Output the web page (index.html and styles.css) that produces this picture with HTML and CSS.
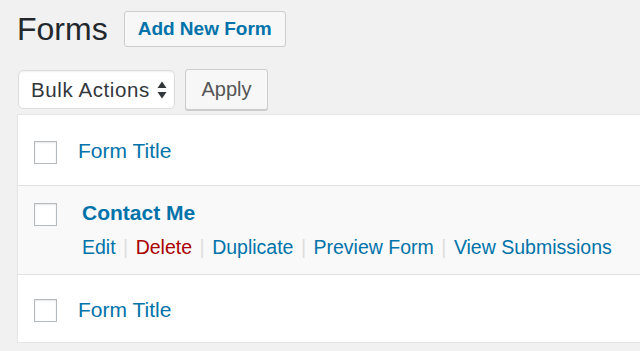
FILE: index.html
```html
<!DOCTYPE html>
<html lang="en">
<head>
<meta charset="utf-8">
<title>Forms</title>
<link rel="stylesheet" href="styles.css">
</head>
<body>
<div class="wrap">
  <div class="title-row">
    <h1 class="page-title">Forms</h1>
    <a class="title-action" href="#">Add New Form</a>
  </div>
  <div class="tablenav">
    <div class="select">
      <span class="select-label">Bulk Actions</span>
      <svg class="select-arrows" width="10" height="18" viewBox="0 0 10 18" aria-hidden="true">
        <path d="M5 0.5 L9.5 7 L0.5 7 Z" fill="#32373c"/>
        <path d="M0.5 11 L9.5 11 L5 17.5 Z" fill="#32373c"/>
      </svg>
    </div>
    <button class="button" type="button">Apply</button>
  </div>
  <div class="list">
    <div class="row row-head">
      <span class="cb"></span>
      <a class="col-title" href="#">Form Title</a>
    </div>
    <div class="row row-item">
      <span class="cb"></span>
      <div class="cell">
        <a class="row-title" href="#">Contact Me</a>
        <div class="row-actions">
          <a href="#">Edit</a><span class="sep">|</span><a class="danger" href="#">Delete</a><span class="sep">|</span><a href="#">Duplicate</a><span class="sep">|</span><a href="#">Preview Form</a><span class="sep">|</span><a href="#">View Submissions</a>
        </div>
      </div>
    </div>
    <div class="row row-foot">
      <span class="cb"></span>
      <a class="col-title" href="#">Form Title</a>
    </div>
  </div>
</div>
</body>
</html>
```

FILE: styles.css
```css
html, body {
  margin: 0;
  padding: 0;
}
body {
  background: #f1f1f1;
  font-family: "Liberation Sans", Arial, sans-serif;
  color: #444;
  overflow: hidden;
}
a {
  text-decoration: none;
  color: #0073aa;
}
.wrap {
  padding-left: 17px;
}
.title-row {
  display: flex;
  align-items: center;
  gap: 16px;
  margin-top: 11px;
  height: 36px;
}
.page-title {
  margin: 0;
  font-size: 32px;
  line-height: 36px;
  font-weight: 400;
  color: #23282d;
}
.title-action {
  box-sizing: border-box;
  height: 36px;
  display: flex;
  align-items: center;
  padding: 0 13px;
  border: 1px solid #ccc;
  border-radius: 3px;
  background: #f7f7f7;
  font-size: 19px;
  font-weight: 700;
  color: #0073aa;
}
.tablenav {
  display: flex;
  align-items: flex-start;
  gap: 10px;
  margin-top: 22px;
  height: 40px;
}
.select {
  box-sizing: border-box;
  margin-top: 1px;
  height: 39px;
  width: 157px;
  display: flex;
  align-items: center;
  justify-content: space-between;
  padding: 0 7px 0 12px;
  background: #fff;
  border: 1px solid #ddd;
  border-radius: 5px;
  box-shadow: inset 0 1px 2px rgba(0,0,0,0.07);
  margin-left: 1px;
}
.select-label {
  font-size: 20.5px;
  letter-spacing: 0.6px;
  color: #32373c;
}
.select-arrows {
  display: block;
}
.button {
  box-sizing: border-box;
  height: 41px;
  width: 83px;
  padding: 0;
  margin: 0;
  border: 1px solid #ccc;
  border-radius: 3px;
  background: #f7f7f7;
  box-shadow: 0 1px 0 #ccc;
  font-family: "Liberation Sans", Arial, sans-serif;
  font-size: 20px;
  color: #555;
}
.list {
  margin-top: 5px;
  margin-right: -12px;
  background: #fff;
  border: 1px solid #e5e5e5;
  box-shadow: 0 1px 1px rgba(0,0,0,0.04);
}
.row {
  display: flex;
  align-items: flex-start;
  padding-left: 16px;
  box-sizing: border-box;
}
.cb {
  flex: none;
  box-sizing: border-box;
  width: 23px;
  height: 23px;
  border: 1px solid #b4b9be;
  background: #fff;
  box-shadow: inset 0 1px 2px rgba(0,0,0,0.1);
}
.col-title {
  font-size: 21px;
  line-height: 24px;
  margin-left: 21px;
}
.row-head {
  height: 71px;
  border-bottom: 1px solid #e1e1e1;
}
.row-head .cb {
  margin-top: 26px;
}
.row-head .col-title {
  margin-top: 24px;
}
.row-item {
  height: 89px;
  background: #f9f9f9;
  border-bottom: 1px solid #e1e1e1;
}
.row-item .cb {
  margin-top: 17px;
}
.cell {
  margin-left: 25px;
  margin-top: 15px;
}
.row-title {
  display: block;
  font-size: 21px;
  line-height: 24px;
  font-weight: 700;
}
.row-actions {
  margin-top: 10px;
  font-size: 19.5px;
  line-height: 24px;
  white-space: nowrap;
}
.row-actions .danger {
  color: #a00;
}
.sep {
  color: #ddd;
  padding: 0 7.5px;
}
.row-foot {
  height: 67px;
}
.row-foot .cb {
  margin-top: 24px;
}
.row-foot .col-title {
  margin-top: 23px;
}
```
